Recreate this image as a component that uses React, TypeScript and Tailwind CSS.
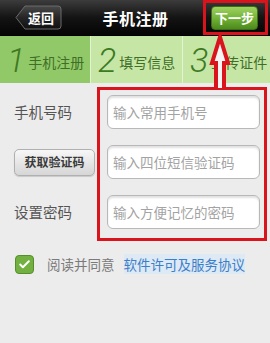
import {Check} from "lucide-react";

const steps = [
  {n: "1", label: "手机注册", active: true},
  {n: "2", label: "填写信息", active: false},
  {n: "3", label: "上传证件", active: false}
];

const rows = [
  {label: "手机号码", placeholder: "输入常用手机号", button: false},
  {label: "获取验证码", placeholder: "输入四位短信验证码", button: true},
  {label: "设置密码", placeholder: "输入方便记忆的密码", button: false}
];

const font = {fontFamily: '"Noto Sans CJK SC", "Noto Sans", sans-serif'};

const App = () => {
  return (
    <div
      className="relative w-[270px] h-[343px] overflow-hidden bg-[#ececec]"
      style={font}
    >
      {/* header */}
      <div className="h-[36px] flex items-center justify-between px-[15px] bg-gradient-to-b from-[#3c3c3c] via-[#141414] to-[#050505] border-b border-[#000]">
        <div className="relative w-[47px] h-[25px] flex items-center justify-center">
          <svg className="absolute inset-0" width="47" height="25" viewBox="0 0 47 25">
            <defs>
              <linearGradient id="bk" x1="0" y1="0" x2="0" y2="1">
                <stop offset="0" stopColor="#4a4a4a" />
                <stop offset="0.5" stopColor="#252525" />
                <stop offset="1" stopColor="#111" />
              </linearGradient>
            </defs>
            <path
              d="M1 12.5 L10 1 H43 Q46 1 46 4 V21 Q46 24 43 24 H10 Z"
              fill="url(#bk)"
              stroke="#6a6a6a"
              strokeWidth="1"
            />
          </svg>
          <span className="relative pl-[5px] text-[13px] font-bold text-white leading-none">返回</span>
        </div>
        <div className="text-[16px] font-bold text-white leading-none tracking-[0.5px] mr-[2px]">手机注册</div>
        <div className="w-[47px] h-[24px] rounded-[4px] border border-[#3d6e16] bg-gradient-to-b from-[#9fd260] via-[#74b338] to-[#4c8a1c] flex items-center justify-center text-[13px] font-bold text-white leading-none mr-[-3px]">
          下一步
        </div>
      </div>

      {/* steps */}
      <div className="h-[47px] grid grid-cols-[90px_92px_1fr] bg-[#c6e6a6]">
        {steps.map((s, i) => (
          <div
            key={s.n}
            className={
              "flex items-center gap-[3px] pl-[7px] " +
              (s.active ? "bg-[#92c968] " : "") +
              (i > 0 ? "border-l border-[#e2f2d2]" : "")
            }
          >
            <span
              className="text-[34px] italic font-light text-[#3e7a22] leading-none"
              style={{fontFamily: "Roboto, sans-serif"}}
            >
              {s.n}
            </span>
            <span className="text-[14px] text-[#3f6e27] leading-none mt-[4px]">{s.label}</span>
          </div>
        ))}
      </div>

      {/* form */}
      <div className="flex mt-[4px]">
        <div className="w-[97px] flex flex-col gap-[16px] pt-[8px] pl-[14px]">
          {rows.map((r) =>
            r.button ? (
              <div key={r.label} className="h-[34px] flex items-center">
                <div className="w-[81px] h-[27px] rounded-[5px] border border-[#b0b0b0] bg-gradient-to-b from-[#f7f7f7] to-[#d6d6d6] shadow-[0_1px_1px_rgba(0,0,0,0.15)] flex items-center justify-center text-[12px] font-bold text-[#3a3a3a]">
                  {r.label}
                </div>
              </div>
            ) : (
              <div key={r.label} className="h-[34px] flex items-center text-[14.5px] text-[#555]">
                {r.label}
              </div>
            )
          )}
        </div>
        <div className="w-[170px] border-[3px] border-[#d9141c] pl-[7px] pr-[4px] pt-[5px] pb-[9px] flex flex-col gap-[16px]">
          {rows.map((r) => (
            <div
              key={r.placeholder}
              className="h-[34px] rounded-[6px] border border-[#b8b8b8] bg-white shadow-[inset_0_2px_2px_rgba(0,0,0,0.12)] flex items-center pl-[5px] text-[13.5px] text-[#a3a3a3]"
            >
              {r.placeholder}
            </div>
          ))}
        </div>
      </div>

      {/* agreement */}
      <div className="flex items-center mt-[13px] pl-[15px]">
        <div className="w-[19px] h-[19px] rounded-[4px] bg-[#72b141] border border-[#568f2a] flex items-center justify-center">
          <Check size={13} strokeWidth={3.5} color="#fff" />
        </div>
        <span className="ml-[13px] text-[13.5px] text-[#7a7a7a]">阅读并同意</span>
        <span className="ml-[9px] text-[13.5px] text-[#3c7ec8] bg-[#dde9f4]">软件许可及服务协议</span>
      </div>

      {/* annotation: box around next button and arrow */}
      <div className="absolute left-[203px] top-0 w-[65px] h-[35px] border-[3px] border-[#d9141c]" />
      <svg className="absolute left-[208px] top-[34px]" width="24" height="56" viewBox="0 0 24 56">
        <path d="M12 3 L20 29 H16 V56 H8 V29 H4 Z" fill="#f4f4f4" stroke="#d9141c" strokeWidth="4" strokeLinejoin="miter" />
      </svg>
    </div>
  );
};

export default App;
